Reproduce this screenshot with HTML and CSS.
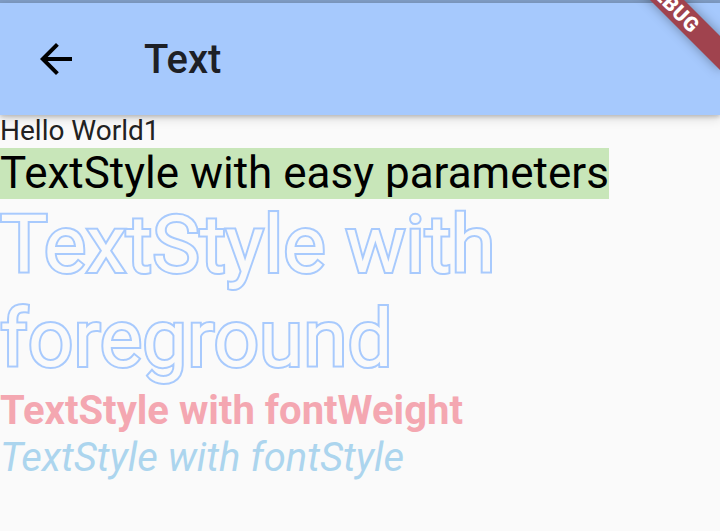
FILE: index.html
```
<!DOCTYPE html>
<html>
<head>
<meta charset="utf-8">
<link rel="stylesheet" href="styles.css">
</head>
<body>
<div class="screen">
  <div class="status"></div>
  <header class="appbar">
    <div class="leading">
      <svg class="back" viewBox="0 0 24 24" width="48" height="48"><path d="M20 11H7.83l5.59-5.59L12 4l-8 8 8 8 1.41-1.41L7.83 13H20v-2z" fill="#000"/></svg>
    </div>
    <div class="title">Text</div>
  </header>
  <main class="content">
    <div class="t-hello">Hello World1</div>
    <div><span class="t-easy">TextStyle with easy parameters</span></div>
    <div class="t-outline">TextStyle with foreground</div>
    <div class="t-weight">TextStyle with fontWeight</div>
    <div class="t-italic">TextStyle with fontStyle</div>
  </main>
  <div class="banner"><span>DEBUG</span></div>
</div>
</body>
</html>
```
FILE: styles.css
```
html, body {
  margin: 0;
  padding: 0;
}
body {
  background: #fafafa;
  font-family: Roboto, "Liberation Sans", sans-serif;
  width: 720px;
  height: 531px;
  overflow: hidden;
}
.screen {
  position: relative;
  width: 720px;
  height: 531px;
  overflow: hidden;
  display: flex;
  flex-direction: column;
}
.status {
  height: 3px;
  background: #7f9cc4;
  flex: none;
}
.appbar {
  height: 112px;
  flex: none;
  background: #a6c9fd;
  display: flex;
  align-items: center;
  box-shadow: 0 2px 4px rgba(0,0,0,0.18), 0 4px 10px rgba(0,0,0,0.12);
  position: relative;
  z-index: 1;
}
.leading {
  width: 112px;
  height: 112px;
  display: flex;
  align-items: center;
  justify-content: center;
}
.back {
  display: block;
}
.title {
  margin-left: 32px;
  padding-top: 2px;
  font-size: 40px;
  font-weight: 500;
  color: #1d2026;
  line-height: 1;
}
.content {
  display: flex;
  flex-direction: column;
  align-items: flex-start;
}
.t-hello {
  font-size: 28px;
  line-height: 32.8px;
  color: #222222;
}
.t-easy {
  display: inline-block;
  font-size: 44px;
  line-height: 51.5px;
  color: #000;
  background: #c8e6b9;
}
.t-outline {
  font-size: 80px;
  line-height: 93.75px;
  color: #fafafa;
  -webkit-text-stroke: 4px #a8cafd;
  paint-order: stroke fill;
  width: 720px;
}
.t-weight {
  font-size: 40px;
  line-height: 47px;
  font-weight: 700;
  color: #f4a7b1;
}
.t-italic {
  font-size: 40px;
  line-height: 47px;
  font-style: italic;
  color: #acd5ee;
}
.banner {
  position: absolute;
  left: 592px;
  top: -7px;
  width: 160px;
  height: 24px;
  background: #a0434e;
  transform: rotate(45deg);
  box-shadow: 0 0 12px rgba(0,0,0,0.35);
  display: flex;
  align-items: center;
  justify-content: center;
  z-index: 2;
}
.banner span {
  color: #fff;
  font-size: 20.4px;
  font-weight: 900;
  line-height: 1;
  letter-spacing: 0.5px;
}
```
